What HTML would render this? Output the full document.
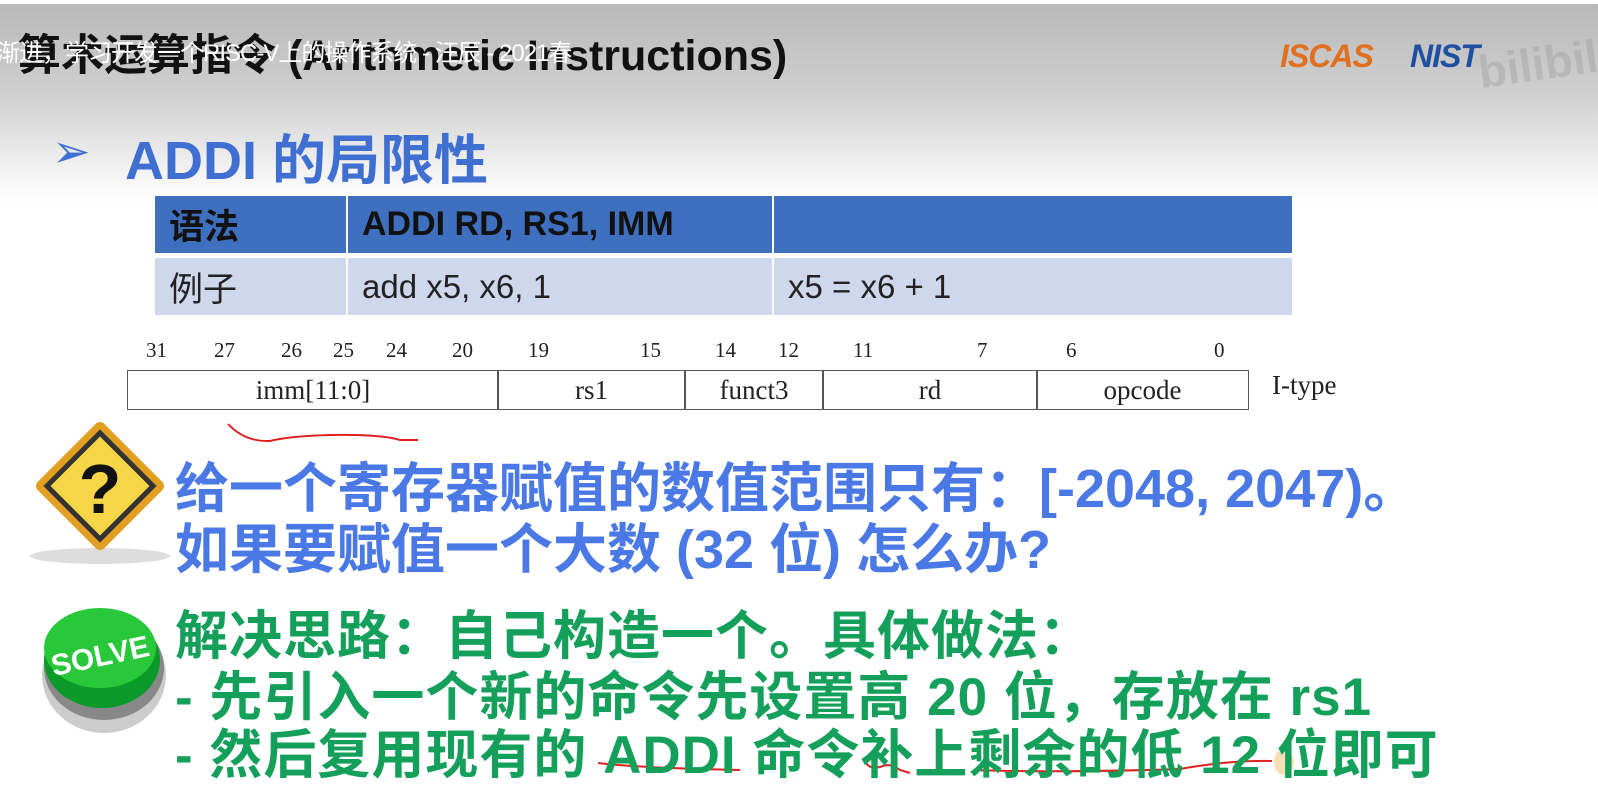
<!DOCTYPE html>
<html><head><meta charset="utf-8"><style>
*{margin:0;padding:0;box-sizing:border-box}
body{width:1598px;height:805px;overflow:hidden;background:#fff;position:relative;font-family:"Liberation Sans","Noto Sans CJK SC",sans-serif}
.hdr{position:absolute;left:0;top:4px;width:1598px;height:200px;background:linear-gradient(#b9b9b9 0%,#cfcfcf 45%,#f4f4f4 85%,#fff 100%)}
.a{position:absolute;white-space:nowrap}
.cell{position:absolute;display:flex;align-items:center;padding-left:14px}
.n{position:absolute;top:338px;font-family:"Liberation Serif",serif;font-size:21px;color:#222}
.b{position:absolute;top:370px;height:40px;border:1.5px solid #555;font-family:"Liberation Serif",serif;font-size:27px;display:flex;align-items:center;justify-content:center;color:#222}
.blue{color:#4a79e6;font-weight:bold;font-size:54px;left:175px}
.green{color:#14a05a;font-weight:bold;font-size:53px;letter-spacing:1px;left:175px}
</style></head><body>
<div class="hdr"></div>
<div class="a" style="left:18px;top:21px;font-size:43px;font-weight:bold;color:#111">算术运算指令 (Arithmetic Instructions)</div>
<div class="a" style="left:-4px;top:33px;font-size:24px;color:#fff;letter-spacing:-1px">渐进，学习开发一个RISC-V上的操作系统 - 汪辰 - 2021春</div>
<div class="a" style="left:1280px;top:38px;font-size:32px;font-weight:bold;font-style:italic;color:#e07020;letter-spacing:-1px">ISCAS</div>
<div class="a" style="left:1410px;top:38px;font-size:32px;font-weight:bold;font-style:italic;color:#1f4fa0;letter-spacing:-1px">NIST</div>
<div class="a" style="left:1478px;top:36px;font-size:46px;font-weight:bold;color:rgba(150,150,150,.35);transform:rotate(-8deg)">bilibili</div>
<div class="a" style="left:52px;top:124px;font-size:46px;color:#3f6fd0">➢</div>
<div class="a" style="left:125px;top:116px;font-size:54px;font-weight:bold;color:#3f6fd0">ADDI 的局限性</div>

<div class="cell" style="left:155px;top:196px;width:191px;height:57px;background:#3f6fbf;font-size:35px;font-weight:bold;color:#111">语法</div>
<div class="cell" style="left:348px;top:196px;width:424px;height:57px;background:#3f6fbf;font-size:34px;font-weight:bold;color:#111">ADDI RD, RS1, IMM</div>
<div class="cell" style="left:774px;top:196px;width:518px;height:57px;background:#3f6fbf"></div>
<div class="cell" style="left:155px;top:258px;width:191px;height:57px;background:#cfd7ec;font-size:34px;color:#222">例子</div>
<div class="cell" style="left:348px;top:258px;width:424px;height:57px;background:#cfd7ec;font-size:33px;color:#222">add x5, x6, 1</div>
<div class="cell" style="left:774px;top:258px;width:518px;height:57px;background:#cfd7ec;font-size:33px;color:#222">x5 = x6 + 1</div>

<div class="n" style="left:146px">31</div><div class="n" style="left:214px">27</div><div class="n" style="left:281px">26</div><div class="n" style="left:333px">25</div><div class="n" style="left:386px">24</div><div class="n" style="left:452px">20</div><div class="n" style="left:528px">19</div><div class="n" style="left:640px">15</div><div class="n" style="left:715px">14</div><div class="n" style="left:778px">12</div><div class="n" style="left:853px">11</div><div class="n" style="left:977px">7</div><div class="n" style="left:1066px">6</div><div class="n" style="left:1214px">0</div>
<div class="b" style="left:127px;width:372px">imm[11:0]</div>
<div class="b" style="left:497px;width:189px">rs1</div>
<div class="b" style="left:684px;width:140px">funct3</div>
<div class="b" style="left:822px;width:216px">rd</div>
<div class="b" style="left:1036px;width:213px">opcode</div>
<div class="a" style="left:1272px;top:370px;font-family:'Liberation Serif',serif;font-size:27px;color:#222">I-type</div>

<svg class="a" style="left:0;top:0" width="1598" height="805">
<path d="M228 424 Q245 442 270 441 Q290 436 330 435 Q380 434 400 440 L418 440" fill="none" stroke="#e02020" stroke-width="2"/>
<path d="M598 763 Q640 768 740 770" fill="none" stroke="#e02020" stroke-width="2"/>
<path d="M865 758 Q866 770 880 767 Q890 762 900 770 L910 773" fill="none" stroke="#e02020" stroke-width="2"/>
<path d="M975 770 Q1060 773 1180 769 Q1230 760 1272 761" fill="none" stroke="#e02020" stroke-width="2"/>
<ellipse cx="1284" cy="762" rx="10" ry="13" fill="#f2c070" opacity=".5"/>
<ellipse cx="100" cy="556" rx="70" ry="8" fill="#ddd"/>
<g transform="translate(100,486) rotate(45)"><rect x="-47" y="-47" width="94" height="94" rx="6" fill="#e2a020"/><rect x="-40" y="-40" width="80" height="80" fill="#333"/><rect x="-35" y="-35" width="70" height="70" fill="#f6d646"/></g>
<text x="100" y="513" text-anchor="middle" font-family="Liberation Sans" font-weight="bold" font-size="70" fill="#111">?</text>
<ellipse cx="104" cy="675" rx="62" ry="58" fill="#ccc"/>
<ellipse cx="104" cy="668" rx="60" ry="52" fill="#888"/>
<ellipse cx="102" cy="660" rx="58" ry="48" fill="#0b9a2a"/>
<ellipse cx="100" cy="648" rx="56" ry="40" fill="#28c83a"/>
<text x="100" y="666" text-anchor="middle" font-family="Liberation Sans" font-weight="bold" font-size="30" fill="#fff" transform="rotate(-12 100 655)">SOLVE</text>
</svg>

<div class="a blue" style="top:444px">给一个寄存器赋值的数值范围只有：[-2048, 2047)。</div>
<div class="a blue" style="top:505px">如果要赋值一个大数 (32 位) 怎么办?</div>
<div class="a green" style="top:594px">解决思路：自己构造一个。具体做法：</div>
<div class="a green" style="top:655px">- 先引入一个新的命令先设置高 20 位，存放在 rs1</div>
<div class="a green" style="top:713px">- 然后复用现有的 ADDI 命令补上剩余的低 12 位即可</div>
</body></html>
